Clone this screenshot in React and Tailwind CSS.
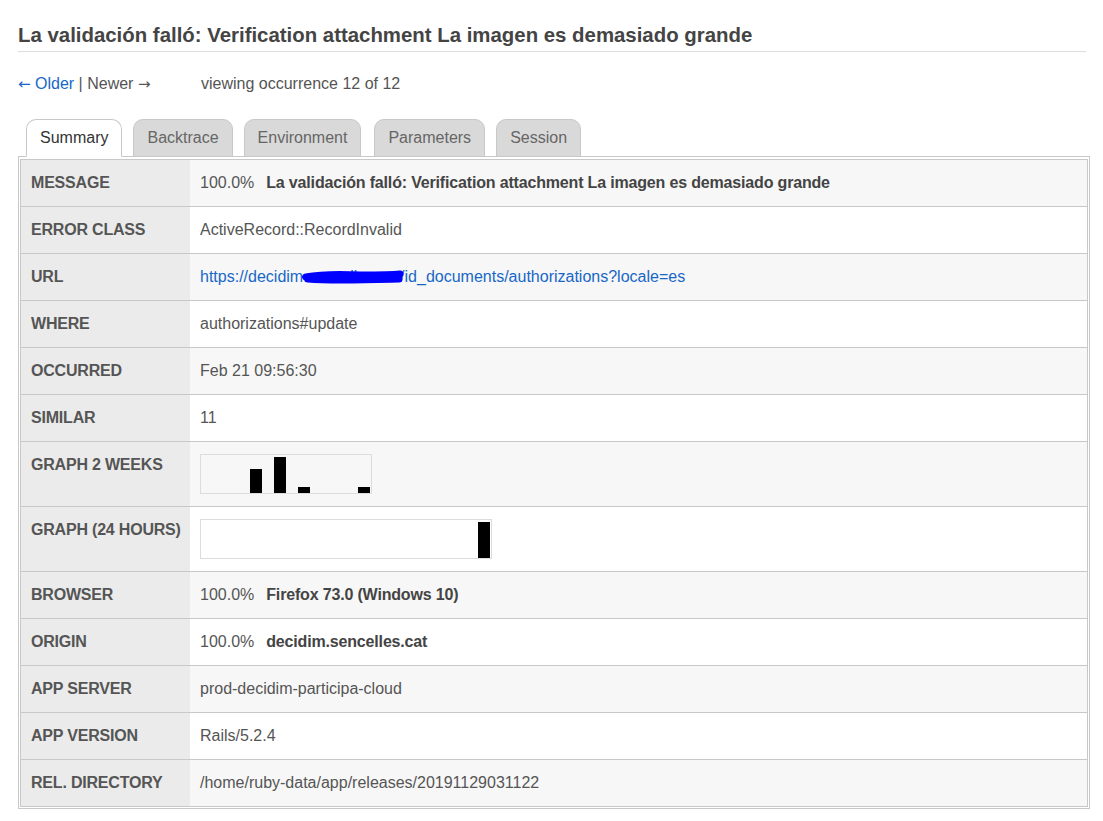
import React from "react";

const FONT = "font-['Liberation_Sans',Arial,Helvetica,sans-serif]";
const ARROW = "font-['DejaVu_Sans',sans-serif] text-[15px]";

function Graph({ width, bars, bg }) {
  return (
    <div className={`border border-[#dcdcdc] h-[40px] ${bg}`} style={{ width }}>
      <svg width={width - 2} height={38} className="block">
        {bars.map((b, i) => (
          <rect key={i} x={b[0]} y={38 - b[1]} width={12} height={b[1]} fill="#000" />
        ))}
      </svg>
    </div>
  );
}

function Row({ label, children, odd, graph }) {
  return (
    <div className="flex border-b border-[#c8c8c8] last:border-b-0">
      <div className="w-[169px] shrink-0 bg-[#ebebeb] px-[10px] py-[13px] leading-5 font-bold text-[#555] text-[16px] whitespace-nowrap tracking-[-0.2px]">
        {label}
      </div>
      <div
        className={`flex-1 px-[10px] ${graph ? "py-3" : "py-[13px]"} leading-5 text-[16px] text-[#555] whitespace-nowrap ${
          odd ? "bg-[#f7f7f7]" : "bg-white"
        }`}
      >
        {children}
      </div>
    </div>
  );
}

export default function App() {
  const tabs = ["Summary", "Backtrace", "Environment", "Parameters", "Session"];
  return (
    <div className={`${FONT} bg-white min-h-[821px] pl-[18px] pt-[23px] text-[#555]`}>
      <h1 className="w-[1068px] text-[20.4px] leading-6 font-bold text-[#444] pb-[4px] border-b border-[#dddddd]">
        La validación falló: Verification attachment La imagen es demasiado grande
      </h1>

      <div className="mt-[22px] flex text-[16px] leading-5">
        <div className="w-[183px]">
          <a className="text-[#1767c7]">
            <span className={ARROW}>←</span> Older
          </a>
          <span className="text-[#555]">
            {" "}| Newer <span className={ARROW}>→</span>
          </span>
        </div>
        <span className="text-[#555]">viewing occurrence 12 of 12</span>
      </div>

      <div className="mt-[25px] ml-[8px] flex gap-[11px] relative z-10 -mb-px">
        {tabs.map((t, i) => (
          <div
            key={t}
            className={`h-[38px] px-[13px] flex items-center text-[16px] rounded-t-[10px] border border-[#c8c8c8] ${
              i === 0 ? "bg-white text-[#333] border-b-white" : "bg-[#d9d9d9] text-[#666]"
            } ${i === 3 ? "ml-[2px]" : ""}`}
          >
            {t}
          </div>
        ))}
      </div>

      <div className="w-[1072px] border border-[#c8c8c8] px-px pb-px pt-[2px]">
        <div className="border border-[#c8c8c8] flex flex-col">
          <Row label="MESSAGE" odd>
            <span>100.0%</span>
            <strong className="ml-3 text-[#444] tracking-[-0.17px]">
              La validación falló: Verification attachment La imagen es demasiado grande
            </strong>
          </Row>
          <Row label="ERROR CLASS">ActiveRecord::RecordInvalid</Row>
          <Row label="URL" odd>
            <span className="relative inline-block text-[#1767c7]">
              https://decidim.sencelles.cat/id_documents/authorizations?locale=es
              <svg
                className="absolute left-[101px] top-[1px]"
                width="106"
                height="18"
                viewBox="0 0 106 18"
              >
                <path
                  d="M5 9 C 20 6, 40 6, 60 7 C 75 7, 90 7, 99 6 M7 11 C 30 13, 60 12, 98 11"
                  stroke="#0000ff"
                  strokeWidth="7"
                  strokeLinecap="round"
                  fill="none"
                />
                <path d="M3 9 L 12 10" stroke="#0000ff" strokeWidth="4" strokeLinecap="round" />
              </svg>
            </span>
          </Row>
          <Row label="WHERE">authorizations#update</Row>
          <Row label="OCCURRED" odd>Feb 21 09:56:30</Row>
          <Row label="SIMILAR">11</Row>
          <Row label="GRAPH 2 WEEKS" odd graph>
            <Graph
              width={172}
              bg="bg-[#f7f7f7]"
              bars={[
                [49, 24],
                [73, 36],
                [97, 6],
                [157, 6],
              ]}
            />
          </Row>
          <Row label="GRAPH (24 HOURS)" graph>
            <Graph width={292} bg="bg-white" bars={[[277, 36]]} />
          </Row>
          <Row label="BROWSER" odd>
            <span>100.0%</span>
            <strong className="ml-3 text-[#444] tracking-[-0.17px]">Firefox 73.0 (Windows 10)</strong>
          </Row>
          <Row label="ORIGIN">
            <span>100.0%</span>
            <strong className="ml-3 text-[#444] tracking-[-0.17px]">decidim.sencelles.cat</strong>
          </Row>
          <Row label="APP SERVER" odd>prod-decidim-participa-cloud</Row>
          <Row label="APP VERSION">Rails/5.2.4</Row>
          <Row label="REL. DIRECTORY" odd>/home/ruby-data/app/releases/20191129031122</Row>
        </div>
      </div>
    </div>
  );
}
